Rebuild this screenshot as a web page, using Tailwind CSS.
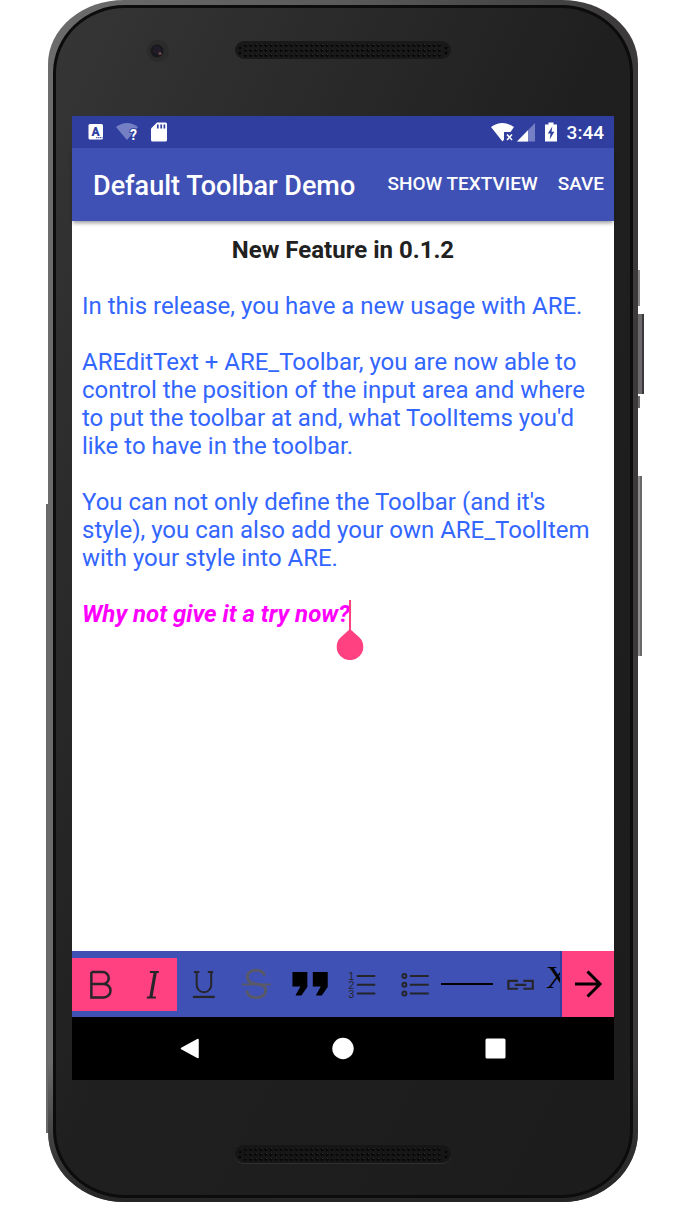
<!DOCTYPE html>
<html lang="en">
<head>
<meta charset="utf-8">
<meta name="viewport" content="width=device-width, initial-scale=1">
<title>Default Toolbar Demo</title>
<script src="https://cdn.jsdelivr.net/npm/@tailwindcss/browser@4"></script>
</head>
<body class="bg-white pl-[48px] pr-[46px] pb-5 font-['Roboto',sans-serif]">

<!-- Phone body -->
<div class="relative">
  <!-- Side rails and hardware buttons -->
  <div class="absolute -left-[2px] top-[504px] bottom-[69px] w-[4px] bg-[#6a6a6a]"></div>
  <div class="absolute -right-[2px] top-[270px] h-[36px] w-[4px] bg-[#8a8889]"></div>
  <div class="absolute -right-[6px] top-[314px] h-[80px] w-[8px] border-r-2 border-[#3a383a] bg-[#6b696c]"></div>
  <div class="absolute -right-[2px] top-[396px] h-[12px] w-[4px] bg-[#6b696c]"></div>
  <div class="absolute -right-[4px] top-[476px] h-[180px] w-[6px] border-r-2 border-[#6a6869] bg-[#8f8d8e]"></div>

  <div class="relative rounded-t-[76px_64px] rounded-b-[76px_70px] bg-linear-to-r from-[#6c6c6c] via-[#5a5a5a] to-[#3b393a] px-[5px] pt-[5px] pb-[4px]">
    <div class="absolute inset-x-0 bottom-0 h-[140px] rounded-b-[76px_70px] bg-linear-to-b from-transparent via-[#2c2b2c]/60 to-[#262526]"></div>
    <div class="relative rounded-t-[72px_68px] rounded-b-[72px_68px] border-[3px] border-[#0c0c0c] bg-linear-to-br from-[#363637] via-[#1f1f1f] via-50% to-[#1c1c1c] px-[16px]">

      <!-- Top bezel: camera and earpiece -->
      <div class="grid h-[108px] grid-cols-[1fr_216px_1fr] items-start pt-[31px]">
        <svg class="ml-[74px] h-[24px] w-[24px]" viewBox="0 0 24 24" aria-hidden="true">
          <circle cx="12" cy="12" r="11" fill="#2b2b2c"/>
          <circle cx="11" cy="12" r="6.500" fill="#19181c"/>
          <circle cx="11" cy="11" r="4" fill="#211c27"/>
          <circle cx="14" cy="14.500" r="1.500" fill="#6e4a50"/>
        </svg>
        <svg class="mt-[2px] h-[18px] w-full" viewBox="0 0 216 18" aria-hidden="true">
          <defs><pattern id="holes" x="8" y="2" width="5.100" height="5" patternUnits="userSpaceOnUse"><circle cx="2.500" cy="2.500" r="1.400" fill="#050505"/><circle cx="3" cy="1.600" r="0.500" fill="#3c3c3c"/></pattern></defs>
          <rect width="216" height="18" rx="9" fill="#191919"/>
          <rect x="8" y="2" width="200" height="15" fill="url(#holes)"/>
          <g fill="#050505"><circle cx="5" cy="7" r="1.300"/><circle cx="5" cy="12" r="1.300"/><circle cx="211" cy="7" r="1.300"/><circle cx="211" cy="12" r="1.300"/></g>
        </svg>
      </div>

      <!-- Screen -->
      <div class="bg-white">
        <div class="flex h-[32px] items-center justify-between bg-[#303f9f] pl-[16px] pr-[10px] text-white">
          <div class="flex items-center gap-[12px]">
            <svg class="h-[20px] w-[16px]" viewBox="0 0 16 20" aria-hidden="true">
              <rect x="0.500" y="2" width="14.500" height="15.500" rx="1.500" fill="#fff"/>
              <text x="7.500" y="13.500" text-anchor="middle" font-family="Roboto, sans-serif" font-weight="900" font-size="12" fill="#303f9f">A</text>
              <path d="M8 15.700h6.500" stroke="#303f9f" stroke-width="1" stroke-dasharray="1.500 .5"/>
            </svg>
            <svg class="h-[20px] w-[23px]" viewBox="0 0 23 20" aria-hidden="true">
              <path d="M0 5Q11-3 22 5L11 18Z" fill="#7580c4"/>
              <text x="17.500" y="17.500" text-anchor="middle" font-family="Roboto, sans-serif" font-weight="700" font-size="14" fill="#fff" stroke="#303f9f" stroke-width="2" paint-order="stroke">?</text>
            </svg>
            <svg class="h-[20px] w-[16px]" viewBox="0 0 16 20" aria-hidden="true">
              <path d="M6 .5h8.500q1.500 0 1.500 1.500v16q0 1.500-1.500 1.500h-13Q0 19.500 0 18V6.500Z" fill="#fff"/>
              <path d="M6.800 2.500v4M10.200 2.500v4M13.400 2.500v4" stroke="#303f9f" stroke-width="1.700"/>
            </svg>
          </div>
          <div class="flex items-center gap-[10px]">
            <div class="flex gap-[3px]">
              <svg class="h-[20px] w-[23px]" viewBox="0 0 23 20" aria-hidden="true">
                <path d="M0 5Q11.500-3 23 5L19.500 10H13v7.500L11.500 19.500Z" fill="#fff"/>
                <path d="M16 12.500l5 5.500M21 12.500l-5 5.500" stroke="#fff" stroke-width="1.600"/>
              </svg>
              <svg class="h-[20px] w-[18px]" viewBox="0 0 18 20" aria-hidden="true">
                <path d="M0 19.500L18 1v18.500Z" fill="#7580c4"/><path d="M0 19.500L11 8.200v11.300Z" fill="#fff"/>
              </svg>
            </div>
            <svg class="h-[20px] w-[12px]" viewBox="0 0 12 20" aria-hidden="true">
              <path d="M3.500 .5h5v2H12V19.500H0V2.500H3.500Z" fill="#fff"/><path d="M7.300 4.500L2.800 11.500H5.500L4.700 17.500L9.300 9.800H6.500Z" fill="#303f9f"/>
            </svg>
            <span class="pt-[1px] text-[19px] leading-[31px] font-medium">3:44</span>
          </div>
        </div>

        <header class="relative flex h-[73px] items-center justify-between bg-[#3f51b5] pl-[21px] pr-[10px] text-white shadow-[0_3px_4px_-1px_rgba(0,0,0,0.4)]">
          <h1 class="pt-[3px] text-[27px] font-medium whitespace-nowrap">Default Toolbar Demo</h1>
          <div class="flex gap-[20px] text-[19px] font-medium whitespace-nowrap">
            <button type="button">SHOW TEXTVIEW</button>
            <button type="button">SAVE</button>
          </div>
        </header>

        <main contenteditable="true" role="textbox" aria-multiline="true" aria-label="Document" class="min-h-[730px] px-[10px] pt-[15px] text-[24px] leading-[28px] text-[#3366ff] outline-none">
          <p class="mb-[28px] text-center font-bold text-[#212121]">New Feature in 0.1.2</p>
          <p class="mb-[28px]">In this release, you have a new usage with ARE.</p>
          <p class="mb-[28px]">AREditText + ARE_Toolbar, you are now able to control the position of the input area and where to put the toolbar at and, what ToolItems you'd like to have in the toolbar.</p>
          <p class="mb-[28px]">You can not only define the Toolbar (and it's style), you can also add your own ARE_ToolItem with your style into ARE.</p>
          <p class="font-bold text-[#ff00ff] italic"><span class="relative">Why not give it a try now?<svg class="absolute -right-[14px] top-0 h-[60px] w-[28px]" viewBox="0 0 28 60" aria-hidden="true"><path d="M13 0h2v30h-2Z" fill="#ff4081"/><path d="M14 29L23.500 37.500A13.300 13.300 0 1 1 4.500 37.500Z" fill="#ff4081"/></svg></span></p>
        </main>

        <!-- Formatting toolbar -->
        <div role="toolbar" aria-label="Formatting" class="flex h-[66px] bg-[#3f51b5]">
          <div class="flex flex-1 items-center overflow-hidden">
            <div class="grid h-[53px] flex-1 grid-cols-9 text-[#25252a]">
              <button type="button" aria-label="Bold" aria-pressed="true" class="bg-[#ff4081]"><svg class="h-[53px] w-full" viewBox="0 0 53 53" fill="none" stroke="currentColor" stroke-width="2.500"><path d="M19.500 14H31a6 6 0 0 1 0 12H19.500M31 26h1a6.700 6.700 0 0 1 0 13.500H19.500V14"/></svg></button>
              <button type="button" aria-label="Italic" aria-pressed="true" class="bg-[#ff4081]"><svg class="h-[53px] w-full" viewBox="0 0 53 53" fill="none" stroke="currentColor" stroke-width="2"><path d="M25 14h9M22 39.500h9"/><path d="M30.500 14L26 39.500" stroke-width="3.200"/></svg></button>
              <button type="button" aria-label="Underline"><svg class="h-[53px] w-full" viewBox="0 0 53 53" fill="none" stroke="currentColor" stroke-width="2"><path d="M17 14h5.500M31 14h5.500M19.800 14V27a7.300 7.300 0 0 0 14.600 0V14"/><path d="M16 39h22" stroke-width="2.300"/></svg></button>
              <button type="button" aria-label="Strikethrough" class="text-[#5a5a66]"><svg class="h-[53px] w-full" viewBox="0 0 53 53" fill="none" stroke="currentColor" stroke-width="2.800"><path d="M35 17.500C33.500 14 30.500 12 26.500 12c-5 0-9 2.500-9 7 0 10 18.500 4.500 18.500 13 0 5-4.500 7.800-9.500 7.800-5.200 0-9-2.500-9.500-7.300"/><path d="M12 26.500h29" stroke-width="2"/></svg></button>
              <button type="button" aria-label="Quote" class="text-black"><svg class="h-[53px] w-full" viewBox="0 0 53 53" fill="currentColor"><path d="M9.500 14H24.500V29L18.500 37.500H12.500L17.500 28.500H9.500Z"/><path d="M30 14H45V29L39 37.500H33L38 28.500H30Z"/></svg></button>
              <button type="button" aria-label="Numbered list"><svg class="h-[53px] w-full" viewBox="0 0 53 53" fill="none" stroke="currentColor" stroke-width="2"><path d="M22 18h18.500M22 26.700h18.500M22 35.500h18.500"/><g fill="currentColor" stroke="none" font-family="Liberation Sans, sans-serif" font-size="11" text-anchor="middle"><text x="16.500" y="22">1</text><text x="16.500" y="31">2</text><text x="16.500" y="40">3</text></g></svg></button>
              <button type="button" aria-label="Bulleted list"><svg class="h-[53px] w-full" viewBox="0 0 53 53" fill="none" stroke="currentColor" stroke-width="2"><path d="M22 18h19M22 26.700h19M22 35.500h19"/><circle cx="16.500" cy="18" r="2"/><circle cx="16.500" cy="26.700" r="2"/><circle cx="16.500" cy="35.500" r="2"/></svg></button>
              <button type="button" aria-label="Horizontal rule" class="text-black"><svg class="h-[53px] w-full" viewBox="0 0 53 53"><path d="M0 26h53" stroke="currentColor" stroke-width="2"/></svg></button>
              <button type="button" aria-label="Link"><svg class="h-[53px] w-full" viewBox="0 0 53 53" fill="none" stroke="currentColor" stroke-width="2.200"><path d="M25 22.800H15.500V30.800H25M30.500 22.800H40V30.800H30.500M22 26.800h11.500"/></svg></button>
            </div>
            <button type="button" aria-label="Superscript" class="h-[53px] w-[14px] overflow-hidden pb-[14px] text-left font-['Liberation_Serif',serif] text-[32px] leading-[39px] text-black">X</button>
          </div>
          <button type="button" aria-label="More tools" class="w-[54px] border-l-2 border-[#303f9f] bg-[#ff4081]"><svg class="mx-auto h-[52px] w-[52px]" viewBox="0 0 52 52" fill="none" stroke="#000" stroke-width="3"><path d="M13 26h25M25.500 13.500L38 26L25.500 38.500"/></svg></button>
        </div>

        <!-- Android navigation -->
        <nav aria-label="System" class="flex h-[63px] items-center justify-center gap-[129px] bg-black">
          <button type="button" aria-label="Back"><svg class="h-[24px] w-[24px]" viewBox="0 0 24 24"><path d="M20 2.500v18L3.500 11.500Z" fill="#fff" stroke="#fff" stroke-width="1.500" stroke-linejoin="round"/></svg></button>
          <button type="button" aria-label="Home"><svg class="h-[24px] w-[24px]" viewBox="0 0 24 24"><circle cx="12" cy="11.500" r="10.700" fill="#fff"/></svg></button>
          <button type="button" aria-label="Overview"><svg class="h-[24px] w-[24px]" viewBox="0 0 24 24"><rect x="1.500" y="1.500" width="20" height="20" rx="1.500" fill="#fff"/></svg></button>
        </nav>
      </div>

      <!-- Bottom bezel: speaker -->
      <div class="flex h-[115px] justify-center pt-[65px]">
        <svg class="h-[19px] w-[216px]" viewBox="0 0 216 19" aria-hidden="true">
          <rect y="1" width="216" height="18" rx="9" fill="#303030"/>
          <rect width="216" height="18" rx="9" fill="#161616"/>
          <rect x="8" y="2" width="200" height="15" fill="url(#holes)"/>
          <g fill="#050505"><circle cx="5" cy="7" r="1.300"/><circle cx="5" cy="12" r="1.300"/><circle cx="211" cy="7" r="1.300"/><circle cx="211" cy="12" r="1.300"/></g>
        </svg>
      </div>
    </div>
  </div>
</div>
</body>
</html>
